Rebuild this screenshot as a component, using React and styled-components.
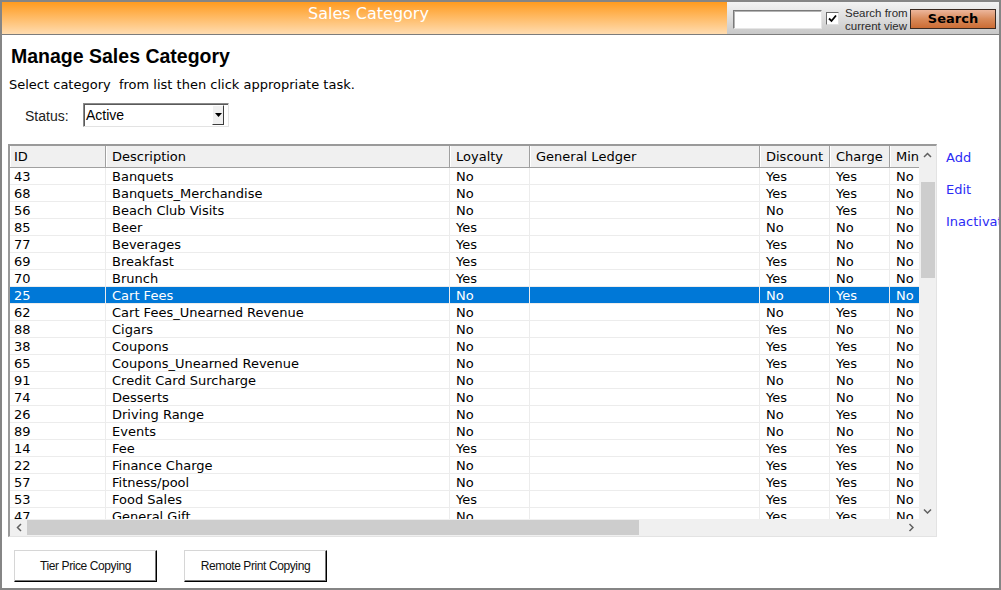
import React from 'react';
import styled, { createGlobalStyle } from 'styled-components';

const GlobalStyle = createGlobalStyle`
  html, body {
    margin: 0;
    padding: 0;
    background: #fff;
    overflow: hidden;
  }
`;

const Frame = styled.div`
  width: 1001px;
  height: 590px;
  box-sizing: border-box;
  border: 2px solid #858585;
  display: flex;
  flex-direction: column;
  overflow: hidden;
  font-family: "DejaVu Sans", Verdana, sans-serif;
  font-size: 13px;
  color: #000;
`;

const TopBar = styled.div`
  display: flex;
  height: 32px;
  flex-shrink: 0;
  border-bottom: 1px solid #7c7c7c;
`;

const TitleBand = styled.div`
  flex: 1;
  padding: 3px 0 0 8px;
  background: linear-gradient(#ff9b1f, #ffdcb0);
  color: #fff;
  font-size: 16px;
  line-height: 18px;
  text-align: center;
`;

const SearchBand = styled.div`
  width: 272px;
  display: flex;
  align-items: flex-start;
  padding-left: 6px;
  box-sizing: border-box;
  background: linear-gradient(#f3f3f3, #c8c8c8);
`;

const SearchInput = styled.div`
  width: 89px;
  height: 19px;
  margin-top: 8px;
  box-sizing: border-box;
  background: #fff;
  border: 1px solid;
  border-color: #7a7a7a #e6e6e6 #e6e6e6 #7a7a7a;
  box-shadow: inset 1px 1px 0 #b4b4b4;
`;

const CheckBox = styled.div`
  width: 13px;
  height: 13px;
  margin: 10px 0 0 4px;
  box-sizing: border-box;
  background: #fff;
  border: 1px solid;
  border-color: #6a6a6a #e0e0e0 #e0e0e0 #6a6a6a;
  display: flex;
  align-items: center;
  justify-content: center;
`;

const CheckLabel = styled.div`
  margin: 5px 0 0 6px;
  width: 61px;
  font-family: "Liberation Sans", Arial, sans-serif;
  font-size: 11.5px;
  line-height: 12.5px;
  color: #2a2a2a;
  white-space: nowrap;
`;

const SearchButton = styled.div`
  width: 86px;
  height: 20px;
  margin: 7px 0 0 4px;
  box-sizing: border-box;
  border: 1px solid #3a2a22;
  background: linear-gradient(#ecb69c, #d98a5a 50%, #cb6c34);
  font-weight: bold;
  font-size: 13px;
  line-height: 18px;
  text-align: center;
  color: #000;
`;

const Main = styled.div`
  flex: 1;
  display: flex;
  flex-direction: column;
  padding-left: 6px;
`;

const Heading = styled.div`
  margin: 10px 0 0 3px;
  font-family: "Liberation Sans", Arial, sans-serif;
  font-weight: bold;
  font-size: 19.5px;
  line-height: 22px;
`;

const Hint = styled.div`
  margin: 10px 0 0 1px;
  line-height: 16px;
  white-space: pre;
`;

const StatusRow = styled.div`
  margin-top: 10px;
  padding-left: 17px;
  display: flex;
  align-items: flex-start;
  font-family: "Liberation Sans", Arial, sans-serif;
  font-size: 14px;
`;

const StatusLabel = styled.div`
  width: 58px;
  padding-top: 5px;
  line-height: 16px;
  color: #222;
`;

const Select = styled.div`
  width: 146px;
  height: 24px;
  box-sizing: border-box;
  border: 1px solid;
  border-color: #8a8a8a #e3e3e3 #e3e3e3 #8a8a8a;
  box-shadow: inset 1px 1px 0 #5a5a5a;
  display: flex;
  align-items: center;
  padding-left: 2px;
  background: #fff;
`;

const SelectText = styled.div`
  flex: 1;
  line-height: 16px;
`;

const DropButton = styled.div`
  width: 12px;
  height: 20px;
  margin-right: 4px;
  box-sizing: border-box;
  background: #f0f0f0;
  border: 1px solid;
  border-color: #fff #3c3c3c #3c3c3c #fff;
  display: flex;
  align-items: center;
  justify-content: center;
`;

const Middle = styled.div`
  margin-top: 17px;
  display: flex;
  align-items: flex-start;
`;

const GridBox = styled.div`
  width: 929px;
  height: 393px;
  box-sizing: border-box;
  border-style: solid;
  border-width: 2px 1px 1px 2px;
  border-color: #9a9a9a #e3e3e3 #e3e3e3 #9a9a9a;
  display: grid;
  grid-template-columns: 909px 17px;
  grid-template-rows: 373px 17px;
  flex-shrink: 0;
`;

const Viewport = styled.div`
  overflow: hidden;
  background: #fff;
`;

const colTemplate = '96px 344px 80px 230px 70px 60px 60px';

const Row = styled.div`
  display: grid;
  grid-template-columns: ${colTemplate};
  width: 940px;
  background: ${(p) => (p.$selected ? '#0078d7' : '#fff')};
  color: ${(p) => (p.$selected ? '#fff' : '#000')};
`;

const HeadCell = styled.div`
  height: 21px;
  line-height: 22px;
  padding-left: ${(p) => p.$pad}px;
  background: #f0f0f0;
  border-right: 1px solid #a0a0a0;
  border-bottom: 1px solid #a0a0a0;
  box-shadow: inset 1px 0 0 #fff;
  white-space: nowrap;
  overflow: hidden;
`;

const Cell = styled.div`
  height: 15px;
  padding: 1px 0 0 ${(p) => p.$pad}px;
  line-height: 16px;
  border-right: 1px solid #ececec;
  border-bottom: 1px solid #ececec;
  white-space: nowrap;
  overflow: hidden;
`;

const VScroll = styled.div`
  background: #f0f0f0;
  display: flex;
  flex-direction: column;
`;

const HScroll = styled.div`
  background: #f0f0f0;
  display: flex;
  align-items: stretch;
`;

const ArrowCell = styled.div`
  flex: 0 0 17px;
  display: flex;
  align-items: center;
  justify-content: center;
`;

const VThumb = styled.div`
  margin: 19px 1px 0 2px;
  height: 96px;
  background: #cdcdcd;
`;

const HThumb = styled.div`
  margin: 1px 0;
  width: 612px;
  background: #cdcdcd;
`;

const Spacer = styled.div`
  flex: 1;
`;

const Corner = styled.div`
  background: #f0f0f0;
`;

const Links = styled.div`
  margin-left: 9px;
  padding-top: 6px;
  display: flex;
  flex-direction: column;
  gap: 16px;
`;

const TaskLink = styled.a`
  color: #2b2bf5;
  line-height: 16px;
  text-decoration: none;
  white-space: nowrap;
`;

const Footer = styled.div`
  margin: 13px 0 0 6px;
  display: flex;
  gap: 27px;
`;

const FooterButton = styled.div`
  width: 143px;
  height: 32px;
  box-sizing: border-box;
  background: #fff;
  border-style: solid;
  border-width: 1px;
  border-color: #d6d6d6 #000 #000 #d6d6d6;
  box-shadow: inset -1px -1px 0 #7a7a7a;
  display: flex;
  align-items: center;
  justify-content: center;
  font-family: "Liberation Sans", Arial, sans-serif;
  font-size: 12px;
  letter-spacing: -0.4px;
  color: #111;
`;

const chevronPaths = {
  up: 'M1 5 L4.5 1.5 L8 5',
  down: 'M1 1.5 L4.5 5 L8 1.5',
  left: 'M5 1 L1.5 4.5 L5 8',
  right: 'M1.5 1 L5 4.5 L1.5 8',
};

const Chevron = ({ dir }) => {
  const vertical = dir === 'up' || dir === 'down';
  return (
    <svg width={vertical ? 9 : 6} height={vertical ? 6 : 9} viewBox={vertical ? '0 0 9 6' : '0 0 6 9'}>
      <path d={chevronPaths[dir]} fill="none" stroke="#606060" strokeWidth="1.5" />
    </svg>
  );
};

const columns = [
  { label: 'ID', pad: 4 },
  { label: 'Description', pad: 6 },
  { label: 'Loyalty', pad: 6 },
  { label: 'General Ledger', pad: 6 },
  { label: 'Discount', pad: 6 },
  { label: 'Charge', pad: 6 },
  { label: 'Min', pad: 6 },
];

const rows = [
  ['43', 'Banquets', 'No', '', 'Yes', 'Yes', 'No'],
  ['68', 'Banquets_Merchandise', 'No', '', 'Yes', 'Yes', 'No'],
  ['56', 'Beach Club Visits', 'No', '', 'No', 'Yes', 'No'],
  ['85', 'Beer', 'Yes', '', 'No', 'No', 'No'],
  ['77', 'Beverages', 'Yes', '', 'Yes', 'No', 'No'],
  ['69', 'Breakfast', 'Yes', '', 'Yes', 'No', 'No'],
  ['70', 'Brunch', 'Yes', '', 'Yes', 'No', 'No'],
  ['25', 'Cart Fees', 'No', '', 'No', 'Yes', 'No'],
  ['62', 'Cart Fees_Unearned Revenue', 'No', '', 'No', 'Yes', 'No'],
  ['88', 'Cigars', 'No', '', 'Yes', 'No', 'No'],
  ['38', 'Coupons', 'No', '', 'Yes', 'Yes', 'No'],
  ['65', 'Coupons_Unearned Revenue', 'No', '', 'Yes', 'Yes', 'No'],
  ['91', 'Credit Card Surcharge', 'No', '', 'No', 'No', 'No'],
  ['74', 'Desserts', 'No', '', 'Yes', 'No', 'No'],
  ['26', 'Driving Range', 'No', '', 'No', 'Yes', 'No'],
  ['89', 'Events', 'No', '', 'No', 'No', 'No'],
  ['14', 'Fee', 'Yes', '', 'Yes', 'Yes', 'No'],
  ['22', 'Finance Charge', 'No', '', 'Yes', 'Yes', 'No'],
  ['57', 'Fitness/pool', 'No', '', 'Yes', 'Yes', 'No'],
  ['53', 'Food Sales', 'Yes', '', 'Yes', 'Yes', 'No'],
  ['47', 'General Gift', 'No', '', 'Yes', 'Yes', 'No'],
];

const selectedId = '25';

export default function App() {
  return (
    <>
      <GlobalStyle />
      <Frame>
        <TopBar>
          <TitleBand>Sales Category</TitleBand>
          <SearchBand>
            <SearchInput />
            <CheckBox>
              <svg width="9" height="9" viewBox="0 0 9 9">
                <path d="M1 4.5 L3.5 7 L8 1.5" fill="none" stroke="#000" strokeWidth="1.8" />
              </svg>
            </CheckBox>
            <CheckLabel>
              Search from
              <br />
              current view
            </CheckLabel>
            <SearchButton>Search</SearchButton>
          </SearchBand>
        </TopBar>

        <Main>
          <Heading>Manage Sales Category</Heading>
          <Hint>Select category  from list then click appropriate task.</Hint>
          <StatusRow>
            <StatusLabel>Status:</StatusLabel>
            <Select>
              <SelectText>Active</SelectText>
              <DropButton>
                <svg width="7" height="4" viewBox="0 0 7 4">
                  <path d="M0 0 L7 0 L3.5 4 Z" fill="#000" />
                </svg>
              </DropButton>
            </Select>
          </StatusRow>

          <Middle>
            <GridBox>
              <Viewport>
                <Row>
                  {columns.map((c) => (
                    <HeadCell key={c.label} $pad={c.pad}>
                      {c.label}
                    </HeadCell>
                  ))}
                </Row>
                {rows.map((r) => (
                  <Row key={r[0]} $selected={r[0] === selectedId}>
                    {r.map((v, i) => (
                      <Cell key={i} $pad={columns[i].pad}>
                        {v}
                      </Cell>
                    ))}
                  </Row>
                ))}
              </Viewport>
              <VScroll>
                <ArrowCell>
                  <Chevron dir="up" />
                </ArrowCell>
                <VThumb />
                <Spacer />
                <ArrowCell>
                  <Chevron dir="down" />
                </ArrowCell>
              </VScroll>
              <HScroll>
                <ArrowCell>
                  <Chevron dir="left" />
                </ArrowCell>
                <HThumb />
                <Spacer />
                <ArrowCell>
                  <Chevron dir="right" />
                </ArrowCell>
              </HScroll>
              <Corner />
            </GridBox>
            <Links>
              <TaskLink>Add</TaskLink>
              <TaskLink>Edit</TaskLink>
              <TaskLink>Inactivate</TaskLink>
            </Links>
          </Middle>

          <Footer>
            <FooterButton>Tier Price Copying</FooterButton>
            <FooterButton>Remote Print Copying</FooterButton>
          </Footer>
        </Main>
      </Frame>
    </>
  );
}
